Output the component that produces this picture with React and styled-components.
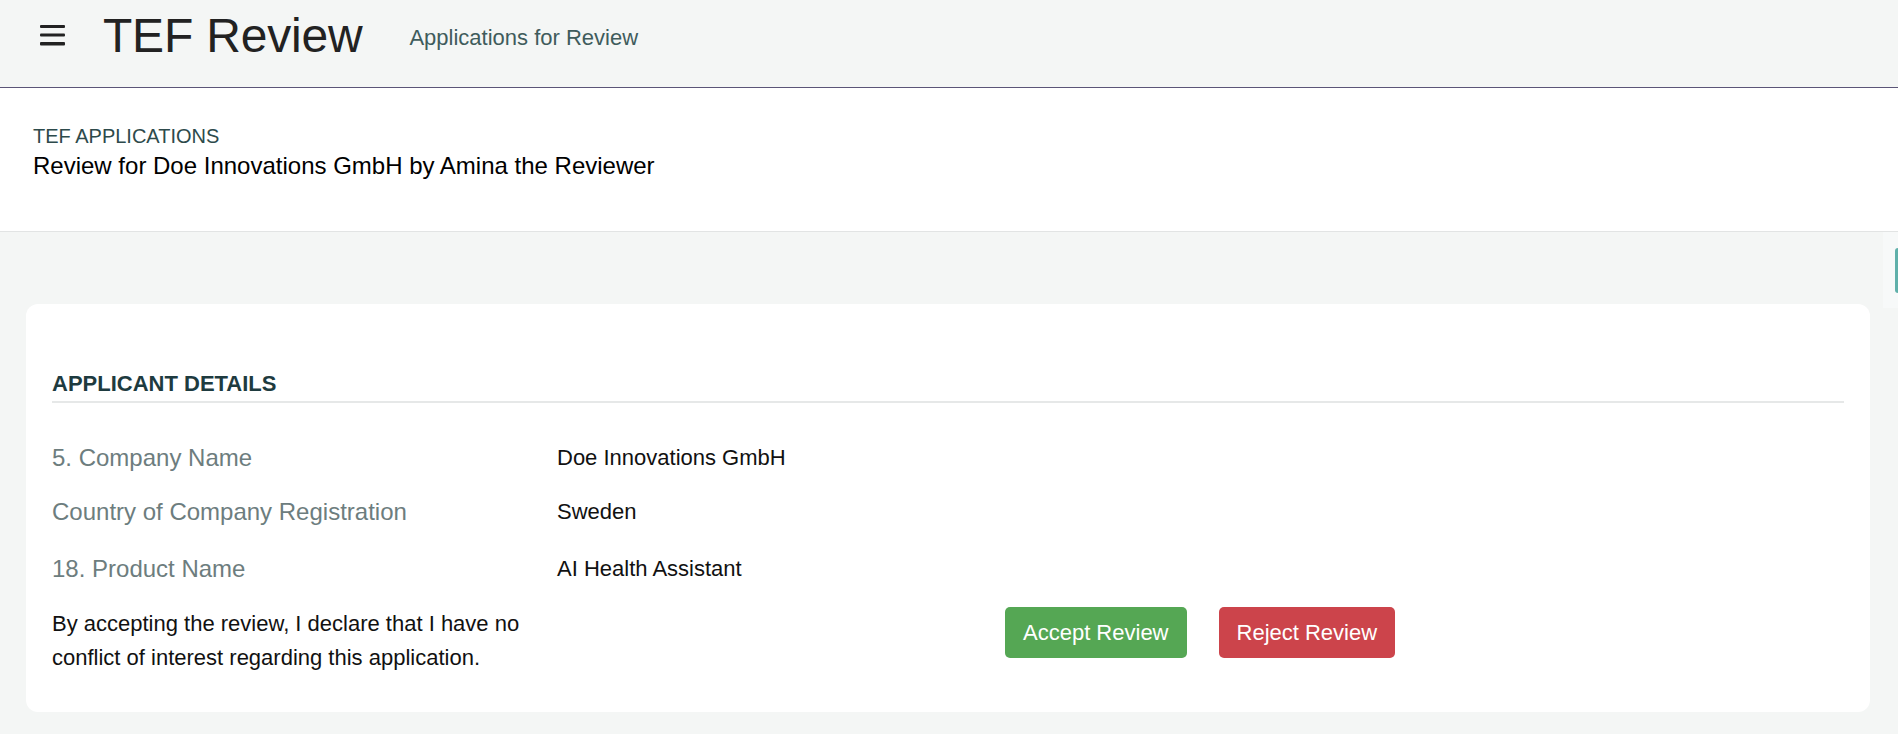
import * as React from 'react'
import styled, { createGlobalStyle } from 'styled-components'

const GlobalStyle = createGlobalStyle`
	html, body {
		margin: 0;
		padding: 0;
		background: #f4f6f5;
		font-family: 'Liberation Sans', Arial, Helvetica, sans-serif;
		color: #111;
	}
	* {
		box-sizing: border-box;
	}
`

const Page = styled.div`
	position: relative;
	min-height: 734px;
	overflow: hidden;
`

const Header = styled.header`
	display: flex;
	align-items: center;
	height: 88px;
	padding: 0 0 16px 40px;
	background: #f4f6f5;
	border-bottom: 1px solid #5b5577;
`

const MenuButton = styled.button`
	display: flex;
	padding: 0;
	border: none;
	background: none;
	margin-top: 0;
	cursor: pointer;
`

const Brand = styled.h1`
	margin: 0 0 0 38px;
	font-size: 48px;
	font-weight: 400;
	color: #222;
	letter-spacing: -0.2px;
`

const NavLink = styled.a`
	margin-left: 47px;
	margin-top: 4px;
	font-size: 22px;
	color: #3f5c5c;
	text-decoration: none;
`

const TitleBar = styled.section`
	height: 144px;
	padding: 36px 33px 0;
	background: #fff;
	border-bottom: 1px solid #e2e4e4;
`

const Eyebrow = styled.div`
	font-size: 20px;
	line-height: 24px;
	color: #2d4a4b;
	text-transform: uppercase;
`

const PageTitle = styled.div`
	margin-top: 4px;
	font-size: 24px;
	line-height: 28px;
	color: #000;
`

const Content = styled.main`
	padding: 72px 28px 21px 26px;
`

const Card = styled.div`
	background: #fff;
	border-radius: 12px;
	padding: 67px 26px 37px 26px;
`

const SectionTitle = styled.h2`
	margin: 0 0 28px;
	padding-bottom: 4px;
	font-size: 22px;
	line-height: 26px;
	font-weight: 700;
	color: #1e3b3f;
	text-transform: uppercase;
	border-bottom: 2px solid #e6e8e8;
`

const FieldRow = styled.div`
	display: grid;
	grid-template-columns: 505px 1fr;
	align-items: center;
	padding: ${p => p.$pad || 12}px 0;
`

const Label = styled.div`
	font-size: 24px;
	line-height: 30px;
	color: #6d7d7e;
`

const Value = styled.div`
	font-size: 22px;
	line-height: 30px;
	color: #111;
`

const DeclareRow = styled.div`
	display: grid;
	grid-template-columns: 505px 448px auto;
	align-items: start;
	margin-top: 8px;
`

const Declaration = styled.p`
	margin: 0;
	max-width: 490px;
	font-size: 22px;
	line-height: 34px;
	color: #111;
`

const Actions = styled.div`
	grid-column: 3;
	display: flex;
	gap: 32px;
`

const ActionButton = styled.button`
	height: 51px;
	padding: 0 18px;
	border: none;
	border-radius: 5px;
	font-family: inherit;
	font-size: 22px;
	color: #fff;
	background: ${p => (p.$variant === 'reject' ? '#cc444b' : '#55a754')};
	cursor: pointer;
`

const SideTab = styled.div`
	position: absolute;
	top: 232px;
	right: 0;
	width: 15px;
	height: 76px;
	background: #f7f9f9;
	&::after {
		content: '';
		position: absolute;
		top: 16px;
		right: 0;
		width: 3px;
		height: 45px;
		border-radius: 3px 0 0 3px;
		background: #5fb0aa;
	}
`

const fields = [
	{ label: '5. Company Name', value: 'Doe Innovations GmbH' },
	{ label: 'Country of Company Registration', value: 'Sweden' },
	{ label: '18. Product Name', value: 'AI Health Assistant', pad: 15 }
]

const MenuIcon = () => (
	<svg width="25" height="21" viewBox="0 0 25 21">
		<rect x="0" y="0" width="25" height="3" rx="1" fill="#222" />
		<rect x="0" y="8.5" width="25" height="3" rx="1" fill="#222" />
		<rect x="0" y="17" width="25" height="3.4" rx="1" fill="#222" />
	</svg>
)

const App = () => {
	return (
		<Page>
			<GlobalStyle />
			<Header>
				<MenuButton aria-label="Menu">
					<MenuIcon />
				</MenuButton>
				<Brand>TEF Review</Brand>
				<NavLink href="#">Applications for Review</NavLink>
			</Header>
			<TitleBar>
				<Eyebrow>TEF Applications</Eyebrow>
				<PageTitle>Review for Doe Innovations GmbH by Amina the Reviewer</PageTitle>
			</TitleBar>
			<Content>
				<Card>
					<SectionTitle>Applicant Details</SectionTitle>
					{fields.map(item => (
						<FieldRow key={item.label} $pad={item.pad}>
							<Label>{item.label}</Label>
							<Value>{item.value}</Value>
						</FieldRow>
					))}
					<DeclareRow>
						<Declaration>
							By accepting the review, I declare that I have no conflict of
							interest regarding this application.
						</Declaration>
						<Actions>
							<ActionButton>Accept Review</ActionButton>
							<ActionButton $variant="reject">Reject Review</ActionButton>
						</Actions>
					</DeclareRow>
				</Card>
			</Content>
			<SideTab />
		</Page>
	)
}

export default App
